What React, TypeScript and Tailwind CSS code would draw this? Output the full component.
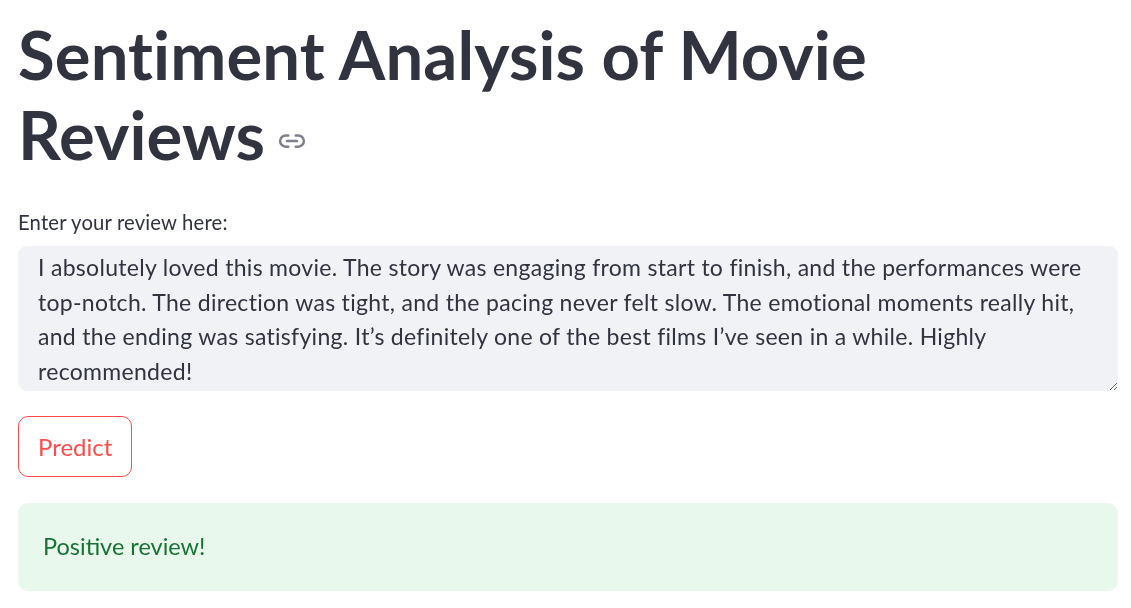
import { useState } from "react";

const review =
  "I absolutely loved this movie. The story was engaging from start to finish, and the performances were top-notch. The direction was tight, and the pacing never felt slow. The emotional moments really hit, and the ending was satisfying. It’s definitely one of the best films I’ve seen in a while. Highly recommended!";

function LinkIcon() {
  return (
    <svg width="30" height="30" viewBox="0 0 24 24" fill="none" className="text-[#7d808b]">
      <path
        d="M9 7.5H7a4.5 4.5 0 0 0 0 9h2M15 7.5h2a4.5 4.5 0 0 1 0 9h-2M8 12h8"
        stroke="currentColor"
        strokeWidth="2"
        strokeLinecap="round"
      />
    </svg>
  );
}

export default function App() {
  const [text, setText] = useState(review);

  return (
    <div className="min-h-screen bg-white pl-[18px] pr-[13px] pt-[14px] font-['Lato','Liberation_Sans',sans-serif] text-[#31333F]">
      <h1 className="text-[67px] font-bold leading-[80px] tracking-[0.1px]">
        Sentiment Analysis of Movie{" "}
        <span className="whitespace-nowrap">
          Reviews
          <span className="ml-[12px] inline-block align-[4px]">
            <LinkIcon />
          </span>
        </span>
      </h1>

      <label className="mt-[36px] block text-[20.3px] leading-[24px] tracking-[0.15px]">
        Enter your review here:
      </label>
      <textarea
        value={text}
        onChange={(e) => setText(e.target.value)}
        className="mt-[12px] block h-[145px] w-full resize-y rounded-[9px] bg-[#F0F2F6] px-5 py-[4px] text-[23px] leading-[34.5px] tracking-[0.3px] text-[#31333F] outline-none"
      />

      <button className="mt-[25px] rounded-[10px] border border-[#FF4B4B] bg-white px-[19px] py-[13px] text-[24px] leading-[33px] text-[#FF4B4B]">
        Predict
      </button>

      <div className="mt-[26px] flex h-[88px] items-center rounded-[10px] bg-[#E8F8EC] px-[25px] text-[23.5px] text-[#177233]">
        Positive review!
      </div>
    </div>
  );
}
